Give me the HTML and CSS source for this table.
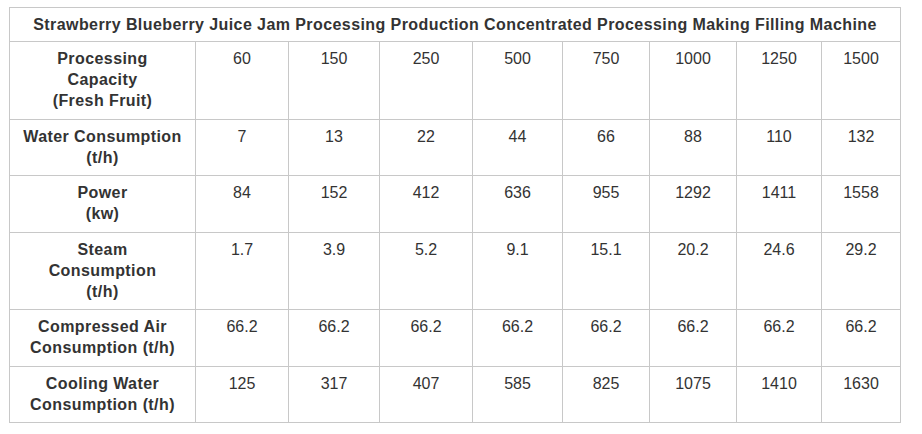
FILE: index.html
```html
<!DOCTYPE html>
<html>
<head>
<meta charset="utf-8">
<link rel="stylesheet" href="styles.css">
</head>
<body>
<table class="spec">
<colgroup>
<col class="c-label"><col class="c1"><col class="c2"><col class="c3"><col class="c4"><col class="c5"><col class="c6"><col class="c7"><col class="c8">
</colgroup>
<tr><th class="title" colspan="9">Strawberry Blueberry Juice Jam Processing Production Concentrated Processing Making Filling Machine</th></tr>
<tr><th>Processing<br>Capacity<br>(Fresh Fruit)</th><td>60</td><td>150</td><td>250</td><td>500</td><td>750</td><td>1000</td><td>1250</td><td>1500</td></tr>
<tr><th>Water Consumption<br>(t/h)</th><td>7</td><td>13</td><td>22</td><td>44</td><td>66</td><td>88</td><td>110</td><td>132</td></tr>
<tr><th>Power<br>(kw)</th><td>84</td><td>152</td><td>412</td><td>636</td><td>955</td><td>1292</td><td>1411</td><td>1558</td></tr>
<tr><th>Steam<br>Consumption<br>(t/h)</th><td>1.7</td><td>3.9</td><td>5.2</td><td>9.1</td><td>15.1</td><td>20.2</td><td>24.6</td><td>29.2</td></tr>
<tr><th>Compressed Air<br>Consumption (t/h)</th><td>66.2</td><td>66.2</td><td>66.2</td><td>66.2</td><td>66.2</td><td>66.2</td><td>66.2</td><td>66.2</td></tr>
<tr><th>Cooling Water<br>Consumption (t/h)</th><td>125</td><td>317</td><td>407</td><td>585</td><td>825</td><td>1075</td><td>1410</td><td>1630</td></tr>
</table>
</body>
</html>
```
FILE: styles.css
```css
html, body {
  margin: 0;
  padding: 0;
  background: #fff;
}
body {
  padding: 7px 0 0 9px;
  font-family: "Liberation Sans", Arial, sans-serif;
  font-size: 16px;
  line-height: 21px;
  color: #333;
}
.spec {
  border-collapse: collapse;
  table-layout: fixed;
  width: 891px;
}
.spec th, .spec td {
  border: 1px solid #c8c8c8;
  padding: 6px 4px 7.5px;
  text-align: center;
  vertical-align: top;
}
.spec th {
  font-weight: bold;
  letter-spacing: 0.42px;
  vertical-align: middle;
}
.spec td {
  font-weight: normal;
}
.spec th.title {
  padding: 6px 2px 6px;
}
.c-label { width: 186px; }
.c1 { width: 93px; }
.c2 { width: 91px; }
.c3 { width: 93px; }
.c4 { width: 90px; }
.c5 { width: 87px; }
.c6 { width: 87px; }
.c7 { width: 85px; }
.c8 { width: 79px; }
```
